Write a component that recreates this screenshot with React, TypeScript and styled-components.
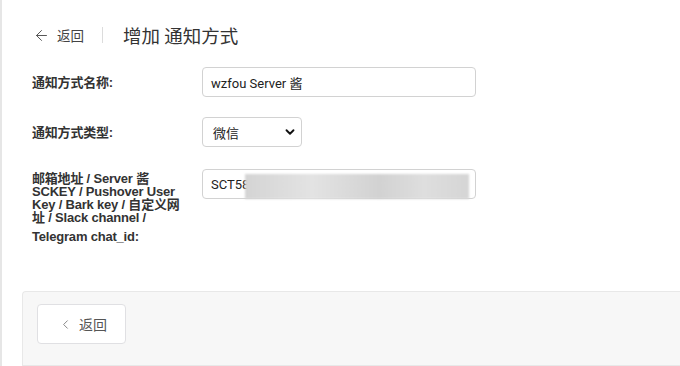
import React from "react";
import styled, { createGlobalStyle } from "styled-components";
import { ArrowLeft, ChevronLeft, ChevronDown } from "lucide-react";

const Global = createGlobalStyle`
  html, body { margin: 0; padding: 0; background: #fff; }
  body { font-family: "Liberation Sans", "Noto Sans CJK SC", sans-serif; color: #333; }
  * { box-sizing: border-box; }
`;

const Page = styled.div`
  width: 680px;
  height: 366px;
  overflow: hidden;
  border-left: 2px solid #e6e6e6;
  display: flex;
  flex-direction: column;
`;

const Header = styled.div`
  display: flex;
  align-items: center;
  height: 70px;
  padding-left: 31px;
`;

const BackLink = styled.a`
  display: flex;
  align-items: center;
  gap: 7px;
  font-size: 13.5px;
  color: #444;
  font-family: "Noto Sans CJK SC", sans-serif;
`;

const Divider = styled.span`
  width: 1px;
  height: 16px;
  background: #dcdcdc;
  margin: 0 20px 0 18px;
`;

const Title = styled.h1`
  margin: 0;
  font-size: 18.5px;
  font-weight: 400;
  color: #333;
  font-family: "Noto Sans CJK SC", sans-serif;
`;

const Form = styled.div`
  display: flex;
  flex-direction: column;
  padding-left: 30px;
`;

const Row = styled.div<{ $mt: number; $multi?: boolean }>`
  display: flex;
  align-items: ${(p) => (p.$multi ? "flex-start" : "center")};
  margin-top: ${(p) => p.$mt}px;
`;

const Label = styled.label<{ $multi?: boolean }>`
  width: 170px;
  padding-right: 18px;
  font-size: 13px;
  font-weight: 700;
  color: #333;
  line-height: 13px;
  padding-top: ${(p) => (p.$multi ? "3px" : "0")};
  letter-spacing: -0.2px;
`;

const LabelTail = styled.span`
  display: block;
  margin-top: 6px;
`;

const InputWrap = styled.div`
  position: relative;
`;

const TextInput = styled.div`
  width: 274px;
  height: 30px;
  border: 1px solid #d2d2d2;
  border-radius: 4px;
  padding: 0 8px;
  display: flex;
  align-items: center;
  font-family: Roboto, "Noto Sans CJK SC", sans-serif;
  font-size: 13px;
  color: #222;
  background: #fff;
`;

const Blur = styled.div`
  position: absolute;
  left: 43px;
  top: 5px;
  width: 224px;
  height: 25px;
  background: linear-gradient(90deg, #d4d4d4, #e3e3e3 30%, #d2d2d2 60%, #dedede 80%, #d5d5d5);
  filter: blur(1px);
`;

const Select = styled.div`
  width: 100px;
  height: 30px;
  border: 1px solid #d2d2d2;
  border-radius: 4px;
  padding: 0 4px 0 10px;
  display: flex;
  align-items: center;
  justify-content: space-between;
  font-size: 13px;
  color: #222;
  font-family: "Noto Sans CJK SC", sans-serif;
  background: #fff;
`;

const Footer = styled.div`
  margin-top: 48px;
  margin-left: 20px;
  flex: 1;
  background: #f7f7f7;
  border: 1px solid #e8e8e8;
  border-right: none;
  border-radius: 4px 0 0 0;
  padding: 12px 14px;
`;

const Button = styled.button`
  width: 89px;
  height: 40px;
  background: #fff;
  border: 1px solid #e0e0e3;
  border-radius: 4px;
  display: flex;
  align-items: center;
  justify-content: center;
  gap: 6px;
  font-size: 14px;
  color: #555;
  font-family: "Noto Sans CJK SC", sans-serif;
  padding: 0 0 0 2px;
`;

export default function App() {
  return (
    <>
      <Global />
      <Page>
        <Header>
          <BackLink>
            <ArrowLeft size={17} strokeWidth={1.4} color="#555" />
            返回
          </BackLink>
          <Divider />
          <Title>增加 通知方式</Title>
        </Header>
        <Form>
          <Row $mt={-3}>
            <Label>通知方式名称:</Label>
            <TextInput>wzfou Server 酱</TextInput>
          </Row>
          <Row $mt={20}>
            <Label>通知方式类型:</Label>
            <Select>
              微信
              <ChevronDown size={14} strokeWidth={3.2} color="#111" />
            </Select>
          </Row>
          <Row $mt={22} $multi>
            <Label $multi>
              邮箱地址 / Server 酱 SCKEY / Pushover User Key / Bark key / 自定义网址 / Slack channel /
              <LabelTail>Telegram chat_id:</LabelTail>
            </Label>
            <InputWrap>
              <TextInput>SCT58</TextInput>
              <Blur />
            </InputWrap>
          </Row>
        </Form>
        <Footer>
          <Button>
            <ChevronLeft size={15} strokeWidth={1.4} color="#777" />
            返回
          </Button>
        </Footer>
      </Page>
    </>
  );
}
